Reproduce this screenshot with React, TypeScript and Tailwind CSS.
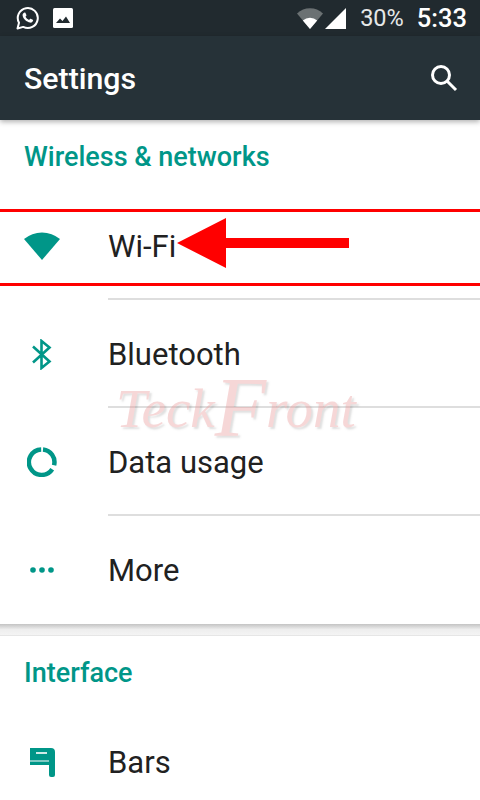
import React from 'react';

const teal = 'text-[#009688]';

function WhatsappIcon() {
  return (
    <svg width="24" height="24" viewBox="0 0 24 24" fill="none" stroke="white" strokeWidth="2">
      <path d="M1.5 22.5 L3 16.8 A10 10 0 1 1 7.2 20.9 Z" strokeLinejoin="round" />
      <path
        d="M8.6 6.6c.4 0 .7 0 .9.5l.9 2c.1.3 0 .5-.1.7l-.8 1c.9 1.500 2 2.500 3.500 3.200l1-1.100c.2-.2.4-.3.700-.2l2 1c.4.2.5.5.4.9-.3 1.400-1.500 2.200-2.900 2-3.900-.6-7-3.700-7.600-7-.2-1.200.6-2.800 2-3z"
        fill="white"
        stroke="none"
      />
    </svg>
  );
}

function ImageIcon() {
  return (
    <svg width="20" height="20" viewBox="0 0 20 20">
      <rect width="20" height="20" rx="1.500" fill="white" />
      <path d="M3 15 L7 10.500 L9.500 13 L13 8.500 L17 15 Z" fill="#212a2f" />
    </svg>
  );
}

function StatusWifi() {
  return (
    <svg width="26" height="21" viewBox="0 0 26 21">
      <path d="M0 5.500 A19 19 0 0 1 26 5.500 L13 21 Z" fill="#6b7173" />
      <path d="M5.800 12.500 A11 11 0 0 1 20.200 12.500 L13 21 Z" fill="white" />
    </svg>
  );
}

function WifiGlyph() {
  return (
    <svg width="36" height="28" viewBox="0 0 36 28">
      <path d="M0 7 A28 28 0 0 1 36 7 L18 28 Z" fill="#009688" />
    </svg>
  );
}

function BluetoothGlyph() {
  return (
    <svg width="20" height="31" viewBox="0 0 20 31" fill="none" stroke="#009688" strokeWidth="2.600">
      <path d="M1 7.500 L17.500 22.500 L9.500 29 V2 L17.500 8.500 L1 23.500" />
    </svg>
  );
}

function DataGlyph() {
  return (
    <svg width="30" height="30" viewBox="0 0 30 30" fill="none" stroke="#009688" strokeWidth="4.500">
      <path d="M14.200 2.500 A12.700 12.700 0 1 0 25.240 22.170" />
      <path d="M16 2.500 A12.700 12.700 0 0 1 27.070 18.200" />
    </svg>
  );
}

function MoreGlyph() {
  return (
    <svg width="24" height="6" viewBox="0 0 24 6" fill="#009688">
      <circle cx="3" cy="3" r="2.800" />
      <circle cx="12" cy="3" r="2.800" />
      <circle cx="21" cy="3" r="2.800" />
    </svg>
  );
}

function BarsGlyph() {
  return (
    <svg width="25" height="30" viewBox="0 0 25 30">
      <path d="M0 1 H21 Q25 1 25 5 V28 Q25 30 23 30 H21 Q19 30 19 28 V18 H0 V14 H0 Z" fill="#009688" />
      <rect x="0" y="13" width="19" height="2" fill="#7fcac3" />
      <rect x="6" y="5" width="11" height="2" fill="#cfeae7" />
    </svg>
  );
}

function Row({ icon, label, divider = true }: { icon: React.ReactNode; label: string; divider?: boolean }) {
  return (
    <div className="flex h-[108px] shrink-0">
      <div className="flex w-[84px] shrink-0 items-center justify-center">{icon}</div>
      <div className={`ml-[24px] flex flex-1 items-center ${divider ? 'border-b-2 border-[#dedede] pt-[2px]' : ''}`}>
        <span className="text-[31px] leading-none text-[#212121]">{label}</span>
      </div>
    </div>
  );
}

function SectionTitle({ children }: { children: React.ReactNode }) {
  return (
    <div className="flex h-[72px] shrink-0 items-center px-[24px] pt-[2px]">
      <span className={`text-[27px] font-medium leading-none ${teal}`}>{children}</span>
    </div>
  );
}

export default function App() {
  return (
    <div className="relative flex h-[800px] w-[480px] flex-col overflow-hidden bg-white font-['Roboto',sans-serif]">
      {/* Status bar */}
      <div className="flex h-[36px] shrink-0 items-center bg-[#212a2f] pl-[16px] pr-[13px]">
        <WhatsappIcon />
        <div className="ml-[13px]"><ImageIcon /></div>
        <div className="ml-auto flex items-center">
          <StatusWifi />
          <svg className="ml-[2px]" width="21" height="21" viewBox="0 0 21 21">
            <path d="M0 21 L21 0 V21 Z" fill="white" />
          </svg>
          <span className="ml-[14px] pt-[2px] text-[23.500px] leading-none text-[#e6e8e8]">30%</span>
          <span className="ml-[13px] pt-[2px] text-[25.500px] font-medium leading-none text-white">5:33</span>
        </div>
      </div>

      {/* Toolbar */}
      <header className="z-10 flex h-[84px] shrink-0 items-center justify-between bg-[#263238] pl-[24px] pr-[22px] shadow-[0_2px_5px_rgba(0,0,0,0.3)]">
        <span className="pt-[2px] text-[30.300px] font-medium leading-none text-white">Settings</span>
        <svg width="28" height="28" viewBox="0 0 28 28" fill="none" stroke="white" strokeWidth="3">
          <circle cx="11" cy="11" r="8.500" />
          <path d="M17 17 L26 26" />
        </svg>
      </header>

      <SectionTitle>Wireless &amp; networks</SectionTitle>
      <Row icon={<WifiGlyph />} label="Wi-Fi" />
      <Row icon={<BluetoothGlyph />} label="Bluetooth" />
      <Row icon={<DataGlyph />} label="Data usage" />
      <Row icon={<MoreGlyph />} label="More" divider={false} />

      {/* Card gap */}
      <div className="h-[12px] shrink-0 border-b border-[#e6e6e6] bg-gradient-to-b from-[#c4c4c4] via-[#eeeeee] to-[#f4f4f4]" />

      <SectionTitle>Interface</SectionTitle>
      <Row icon={<BarsGlyph />} label="Bars" divider={false} />

      {/* Red highlight drawn over the screenshot */}
      <div className="absolute left-0 top-[209px] h-[77px] w-full border-y-[3px] border-[#ff0000]" />
      <svg className="absolute left-[177px] top-[218px]" width="172" height="50" viewBox="0 0 172 50">
        <path d="M0 25 L49 0 V20 H172 V30 H49 V50 Z" fill="#ff0000" />
      </svg>

      {/* Watermark */}
      <div className="absolute left-[116px] top-[378px] flex items-center font-['Liberation_Serif',serif] text-[55px] italic leading-none text-[#e88f8f] opacity-35 [text-shadow:2px_2px_2px_rgba(0,0,0,0.35)]">
        <span>Teck</span>
        <span className="text-[84px] leading-[60px]">F</span>
        <span>ront</span>
      </div>
    </div>
  );
}
